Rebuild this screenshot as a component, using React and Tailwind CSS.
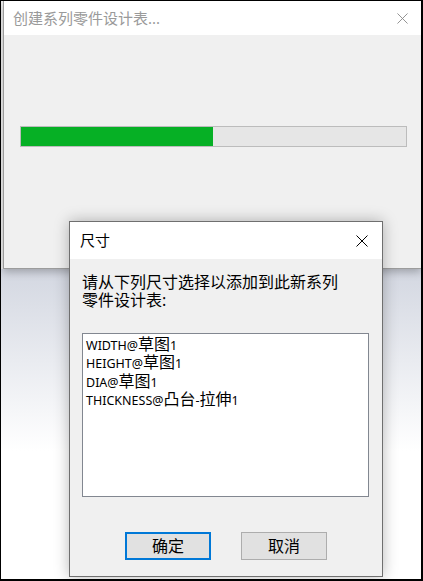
import React from "react";

const cjk = "font-['Noto_Sans','Noto_Sans_CJK_SC',sans-serif]";

function CloseX({ color = "#000", size = 12 }) {
  return (
    <svg width={size} height={size} viewBox="0 0 12 12" fill="none">
      <path d="M0.5 0.5 L11.5 11.5 M11.5 0.5 L0.5 11.5" stroke={color} strokeWidth="1" />
    </svg>
  );
}

function Item({ pre, zh, mid, zh2, post }) {
  return (
    <div className="whitespace-nowrap">
      {pre}
      <span className="text-[16px]">{zh}</span>
      {mid}
      {zh2 && <span className="text-[16px]">{zh2}</span>}
      {post}
    </div>
  );
}

export default function App() {
  return (
    <div
      className={`relative w-[423px] h-[581px] overflow-hidden border-t border-l border-r-2 border-b-2 border-black bg-[linear-gradient(180deg,#efefef_0px,#efefef_268px,#d3d7e1_268px,#ffffff_450px)] ${cjk}`}
    >
      {/* progress window */}
      <div className="absolute left-[2px] top-0 w-[418px] h-[268px] flex flex-col border-l border-b border-[#9c9c9c] bg-[#f0f0f0] shadow-[0_3px_8px_rgba(0,0,0,0.25)]">
        <div className="h-[34px] bg-white flex items-center justify-between pl-[9px] pr-[13px]">
          <span className="text-[15px] leading-none text-[#9a9a9a]">创建系列零件设计表...</span>
          <CloseX color="#8a8a8a" size={11} />
        </div>
        <div className="flex-1 pt-[91px] pl-[16px]">
          <div className="w-[387px] h-[21px] border border-[#bcbcbc] bg-[#e6e6e6]">
            <div className="h-full w-[192px] bg-[#06b025]" />
          </div>
        </div>
      </div>

      {/* dimensions dialog */}
      <div className="absolute left-[68px] top-[220px] w-[314px] h-[356px] flex flex-col border border-[#6f6f6f] bg-[#f0f0f0] shadow-[0_0_14px_rgba(0,0,0,0.28)]">
        <div className="h-[37px] bg-white flex items-center justify-between pl-[10px] pr-[14px]">
          <span className="text-[15px] leading-none text-black">尺寸</span>
          <CloseX />
        </div>
        <div className="flex flex-col pt-[14px]">
          <div className="pl-[12px] text-[16px] leading-[18px] text-black">
            <div>请从下列尺寸选择以添加到此新系列</div>
            <div>零件设计表:</div>
          </div>
          <div className="ml-[12px] mt-[24px] w-[287px] h-[164px] border border-[#828790] bg-white pt-[2px] pl-[3px] text-[12.5px] leading-[17.4px] text-black">
            <Item pre="WIDTH@" zh="草图" post="1" />
            <Item pre="HEIGHT@" zh="草图" post="1" />
            <Item pre="DIA@" zh="草图" post="1" />
            <Item pre="THICKNESS@" zh="凸台" mid="-" zh2="拉伸" post="1" />
          </div>
          <div className="mt-[35px] flex justify-center gap-[30px]">
            <button className="w-[86px] h-[28px] border-2 border-[#0078d7] bg-[#e1e1e1] text-[16px] leading-none text-black">
              确定
            </button>
            <button className="w-[86px] h-[28px] border border-[#adadad] bg-[#e1e1e1] text-[16px] leading-none text-black">
              取消
            </button>
          </div>
        </div>
      </div>
    </div>
  );
}
